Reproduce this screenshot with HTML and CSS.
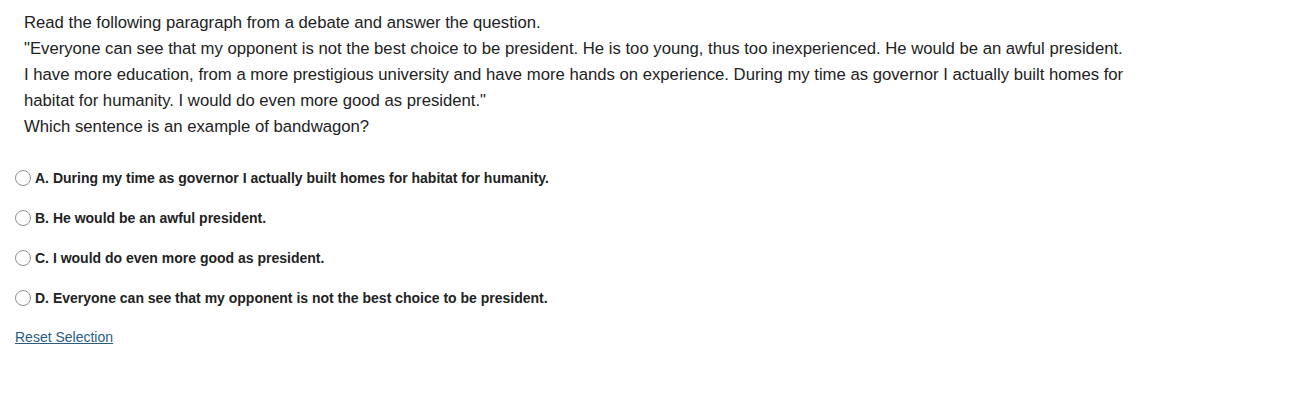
FILE: index.html
```html
<!DOCTYPE html>
<html>
<head>
<meta charset="utf-8">
<link rel="stylesheet" href="styles.css">
</head>
<body>
<div class="page">
  <div class="prompt">
    <p>Read the following paragraph from a debate and answer the question.</p>
    <p>"Everyone can see that my opponent is not the best choice to be president. He is too young, thus too inexperienced. He would be an awful president. I have more education, from a more prestigious university and have more hands on experience. During my time as governor I actually built homes for habitat for humanity. I would do even more good as president."</p>
    <p>Which sentence is an example of bandwagon?</p>
  </div>
  <div class="options">
    <label class="option"><span class="radio"></span><span>A. During my time as governor I actually built homes for habitat for humanity.</span></label>
    <label class="option"><span class="radio"></span><span>B. He would be an awful president.</span></label>
    <label class="option"><span class="radio"></span><span>C. I would do even more good as president.</span></label>
    <label class="option"><span class="radio"></span><span>D. Everyone can see that my opponent is not the best choice to be president.</span></label>
  </div>
  <a class="reset" href="#">Reset Selection</a>
</div>
</body>
</html>
```
FILE: styles.css
```css
html, body {
  margin: 0;
  padding: 0;
  background: #fff;
}
body {
  font-family: "Liberation Sans", Arial, sans-serif;
  color: #222;
}
.page {
  padding: 10px 0 0 15px;
}
.prompt {
  padding-left: 9px;
  width: 1102px;
  font-size: 16.7px;
  line-height: 26px;
  color: #222;
}
.prompt p {
  margin: 0;
}
.options {
  margin-top: 29px;
  display: flex;
  flex-direction: column;
  gap: 22px;
}
.option {
  display: flex;
  align-items: center;
  gap: 4px;
  font-size: 14px;
  font-weight: bold;
  line-height: 18px;
  color: #222;
}
.radio {
  width: 14px;
  height: 14px;
  border: 1px solid #8f8f8f;
  border-radius: 50%;
  box-sizing: content-box;
  flex: none;
}
.reset {
  display: inline-block;
  margin-top: 22px;
  font-size: 14px;
  color: #2b5d83;
  text-decoration: underline;
}
```
